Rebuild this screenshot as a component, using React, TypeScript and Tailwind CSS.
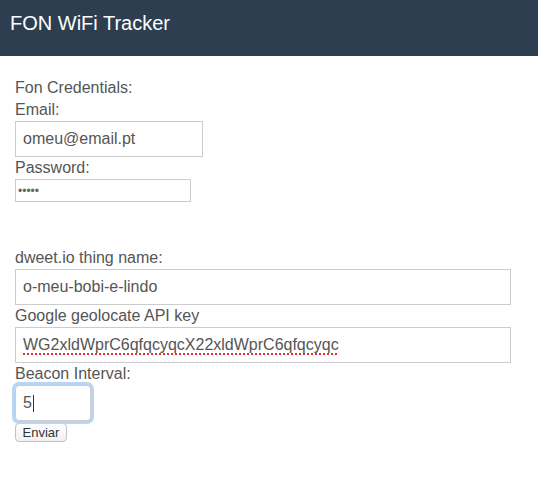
export default function App() {
  const font = { fontFamily: '"Liberation Sans", Arial, sans-serif' };
  const label = 'block text-[16px] leading-[22px] text-[#555]';
  const field =
    'block h-[36px] border border-[#ccc] bg-white px-[7px] text-[16px] text-[#555] outline-none';

  return (
    <div className="min-h-[502px] w-[538px] bg-white" style={font}>
      <header className="h-[56px] bg-[#2c3e50] px-[10px] pt-[11px]">
        <h1 className="text-[20px] leading-[24px] text-white">FON WiFi Tracker</h1>
      </header>

      <form className="px-[15px] pt-[21px]" onSubmit={(e) => e.preventDefault()}>
        <p className={label}>Fon Credentials:</p>
        <label className={label}>Email:</label>
        <input className={`${field} w-[188px]`} defaultValue="omeu@email.pt" />

        <label className={label}>Password:</label>
        <input
          type="password"
          defaultValue="12345"
          className="block h-[23px] w-[176px] border border-[#ccc] bg-white px-[2px] text-[12px] text-[#666] outline-none"
        />

        <div className="h-[45px]" />

        <label className={label}>dweet.io thing name:</label>
        <input className={`${field} w-[496px]`} defaultValue="o-meu-bobi-e-lindo" />

        <label className={label}>Google geolocate API key</label>
        <div className={`${field} w-[496px] flex items-center`}>
          <span className="underline decoration-dotted decoration-[#e0322b] decoration-2 underline-offset-[3px]">
            WG2xldWprC6qfqcyqcX22xldWprC6qfqcyqc
          </span>
        </div>

        <label className={label}>Beacon Interval:</label>
        <div className="relative w-[76px]">
          <input
            className={`${field} w-[76px] rounded-[4px] border-[#a3c9ef] shadow-[0_0_0_3px_#b8d6f4]`}
            defaultValue="5"
          />
          <span className="absolute left-[18px] top-[10px] h-[17px] w-px bg-[#333]" />
        </div>

        <button
          type="submit"
          className="mt-[2px] block h-[19px] w-[52px] rounded-[4px] border border-[#c2c2c2] bg-gradient-to-b from-white to-[#f0f0f0] text-[13px] leading-[17px] text-[#333]"
        >
          Enviar
        </button>
      </form>
    </div>
  );
}
